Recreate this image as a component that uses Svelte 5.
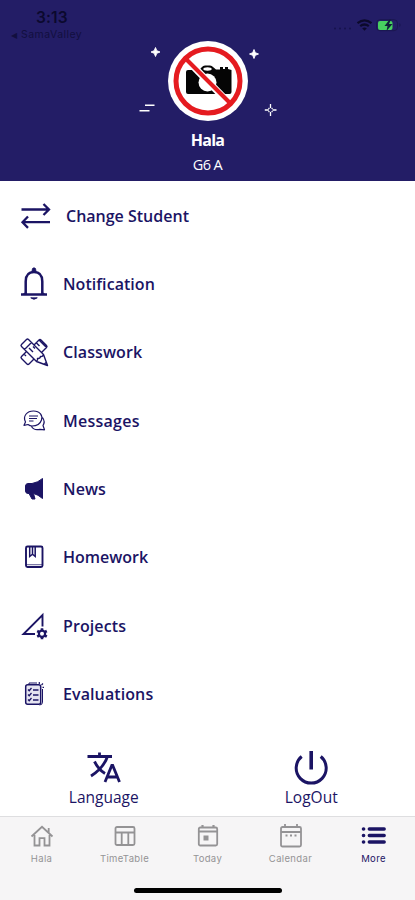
<script>
  const items = [
    { id: 'swap', label: 'Change Student', spacing: 0 },
    { id: 'bell', label: 'Notification', spacing: 0.05 },
    { id: 'classwork', label: 'Classwork', spacing: 0.1 },
    { id: 'messages', label: 'Messages', spacing: 0.25 },
    { id: 'news', label: 'News', spacing: 0.1 },
    { id: 'homework', label: 'Homework', spacing: 0 },
    { id: 'projects', label: 'Projects', spacing: 0.1 },
    { id: 'evaluations', label: 'Evaluations', spacing: 0.1 }
  ];
  const tabs = ['Hala', 'TimeTable', 'Today', 'Calendar', 'More'];
</script>

<main class="screen">
  <header>
    <div class="status">
      <div class="clock"><span class="time">3:13</span><span class="back"><i>◀</i> SamaValley</span></div>
      <svg class="signals" width="70" height="18" viewBox="0 0 70 18">
        <g fill="#17134c"><circle cx="3" cy="12.500" r="1"/><circle cx="8" cy="12.500" r="1"/><circle cx="13" cy="12.500" r="1"/><circle cx="18" cy="12.500" r="1"/></g>
        <g fill="none" stroke="#0c0a2b" stroke-width="2.200"><path d="M25.500 7.200q7-5.600 14 0M28.200 10.200q4.300-3.400 8.600 0"/></g>
        <path d="M30.200 12.300q2.300-1.700 4.600 0l-2.300 2.500z" fill="#0c0a2b"/>
        <rect x="44.500" y="3.700" width="21" height="11" rx="3.500" fill="none" stroke="#1b1750"/>
        <rect x="46" y="5" width="14.500" height="9" rx="2" fill="#48cf60"/>
        <path d="M57.500 3.500l-5 6.500h3l-1 5 6-7h-3.500l2-4.500z" fill="#10203b"/>
        <path d="M67.500 7v4q2-2 0-4" fill="#17134c"/>
      </svg>
    </div>
    <div class="profile">
      <svg width="140" height="84" viewBox="0 0 140 84">
        <circle cx="70" cy="42" r="40" fill="#fff"/>
        <path d="M48 33q0-2 2-2h11l3-3q1-1.500 3-1.500h5q2 0 3 1.500l3 2.500h4v-2.500h3V30h2v-2h3v2l3.500 1v22q0 2-2 2H50q-2 0-2-2z" fill="#050505"/>
        <circle cx="69.500" cy="43.500" r="9" fill="#fff"/>
        <ellipse cx="69.500" cy="30" rx="4.200" ry="1.700" fill="#fff"/>
        <path d="M48 20l44 45" stroke="#fff" stroke-width="7"/>
        <path d="M47.500 19.500l45 45" stroke="#e51b20" stroke-width="4"/>
        <circle cx="70" cy="42" r="32" fill="none" stroke="#e51b20" stroke-width="5"/>
        <path d="M17.500 8.500l1.300 3.200 3.200 1.300-3.200 1.300-1.300 3.200-1.300-3.200L13 13l3.200-1.300zM116 10.500l1.300 3.200 3.200 1.300-3.200 1.300-1.300 3.200-1.300-3.200-3.200-1.300 3.200-1.300z" fill="#fff" stroke="#fff" stroke-width=".9"/>
        <path d="M7 66.200h9.500M1.500 71.700h10" stroke="#fff" stroke-width="1.600"/>
        <path d="M132.500 65v4M132.500 73v4M126.800 71h4M134.500 71h4M130.500 69l4 4M134.500 69l-4 4" fill="none" stroke="#fff" stroke-width="1.300"/>
        <circle cx="132.500" cy="71" r="1.700" fill="#231d66"/>
      </svg>
      <strong>Hala</strong>
      <span>G6 A</span>
    </div>
  </header>

  <nav class="menu">
    {#each items as item}
      <a class="row" class:wide={item.id === 'swap'} href="#{item.id}">
        <svg width="34" height="34" viewBox="0 0 34 34" fill="none" stroke="currentColor" stroke-width="2">
          {#if item.id === 'swap'}
            <path d="M4.500 10.500h27M26.500 5l5.500 5.500-5.500 5.500M33 23.200H6M11 17.500l-5.500 5.700 5.500 5.700" stroke-width="2.300"/>
          {:else if item.id === 'bell'}
            <path d="M8.700 27V14.500Q8.700 5 17 5t8.300 9.500V27" stroke-width="2.500"/>
            <path d="M4 27.500h26" stroke-width="2.500"/>
            <path d="M8 22v3.500l-3 2h5zM26 22v3.500l3 2h-5z" fill="currentColor" stroke="none"/>
            <path d="M14.800 5l.7-3.500q1.500-1.500 3 0l.7 3.500zM13.700 30.800h6.600q-3.300 3-6.600 0z" fill="currentColor" stroke-width=".8"/>
          {:else if item.id === 'classwork'}
            <g stroke-width="1.400" stroke-linejoin="round">
              <path d="M4.500 9.500l5-5q1-1 2 0L26.500 19.500l4 11-11-4L4.500 11.500q-1-1 0-2zM7.500 14.500l7-7M19.500 26.500q1.500-1 1-3 2.500.5 3-2 2 .5 3-2M27 29.500l2-2"/>
              <path d="M17 10l5-5q1-1 2 0l5.500 5.500q1 1 0 2l-5 5M9.500 16.500l-5 5q-1 1 0 2L10 29q1 1 2 0l5-5M19.500 8l3 3M22 5l7.500 7.500M7 19l2 2M12 13l4 4M16 11.500l2 2"/>
            </g>
          {:else if item.id === 'messages'}
            <g stroke-width="1.200" stroke-linejoin="round">
              <path d="M8.500 18C5.500 12 10 7 16.500 7s9.500 4.500 8 9-5 6-9.500 6q-2 0-4-1.500L7 21.300zM25.500 13.500q3 4 .5 8l1.500 4.300-4.500-.5q-6 1.500-8.500-2.800"/>
              <path d="M12 12h9M12 14.500h8M12 17h4.500"/>
            </g>
          {:else if item.id === 'news'}
            <path d="M10.500 11.500h4.500q6-1 10.500-5v20q-4.500-4-9-5l1.500 5.500h-3l-3-5.500h-1.500q-2-.5-2-2.500v-5q0-2 2-2.500z" fill="currentColor" stroke-width="1"/>
          {:else if item.id === 'homework'}
            <rect x="9" y="6.500" width="16.500" height="20.500" rx="1.500" stroke-width="1.900"/>
            <path d="M12.700 7v9.500l2.800-2.300 2.700 2.300V7M15.500 7v7" stroke-width="1.500"/>
            <path d="M9 24.700h16" stroke-width=".7"/>
          {:else if item.id === 'projects'}
            <path d="M18 25H6.500L25.500 6v11.500" stroke-width="1.900"/>
            <circle cx="25" cy="24.800" r="3.100" stroke-width="2.200"/>
            <path d="M25 19.200v2.300M25 28v2.300M20.200 22l2 1.100M27.800 26.500l2 1.100M29.800 22l-2 1.100M22.200 26.500l-2 1.100" stroke-width="2.600"/>
          {:else}
            <rect x="8.700" y="7.800" width="15" height="19.500" rx="2" stroke-width="1.500" fill="#e5e4f0"/>
            <path d="M12 7V6h8M25.500 12v13q0 3-3 3" stroke-width="1"/>
            <path d="M11 12.500l1.200 1.200 2.300-2.700M11 17.500l1.200 1.200 2.300-2.700M11 22.500l1.200 1.200 2.300-2.700M16 13h5.500M16 18h5.500M16 23h5.500" stroke-width="1.300"/>
            <path d="M22.300 7V5M24.500 8l1.500-1.500M25.500 10.300h1.500" stroke-width="1.200"/>
          {/if}
        </svg>
        <span style="letter-spacing:{item.spacing}px">{item.label}</span>
      </a>
    {/each}
  </nav>

  <section class="actions">
    <button>
      <svg width="38" height="38" viewBox="0 0 38 38" fill="none" stroke="currentColor" stroke-width="2.800">
        <path d="M2.500 8.500h24.500M14.500 4.500v4M22.500 8.500Q18.500 20 6 28M9.500 13.500q4 8 10.500 12"/>
        <path d="M20 34l6.800-16.500h.9L34.500 34M22.300 29h10"/>
      </svg>
      <span>Language</span>
    </button>
    <button>
      <svg width="38" height="38" viewBox="0 0 38 38" fill="none" stroke="currentColor" stroke-width="3">
        <path d="M19.200 3v18.500" stroke-width="3.600"/><path d="M9.700 8.500A15 15 0 1 0 28.700 8.500"/>
      </svg>
      <span>LogOut</span>
    </button>
  </section>

  <footer>
    <div class="tabs">
      {#each tabs as tab}
        <a class="tab" class:active={tab === 'More'} href="#{tab}">
          <svg width="28" height="26" viewBox="0 0 28 26" fill="none" stroke="currentColor" stroke-width="1.800">
            {#if tab === 'Hala'}
              <path d="M3.500 13.500L14 3.800l10.500 9.700M6.500 12v10.500h5v-7.300h5v7.300h5V12M20.700 9.500V5"/>
            {:else if tab === 'TimeTable'}
              <rect x="4.500" y="4" width="19" height="18" rx="1.500"/><path d="M4.500 9.500h19M10.700 9.500v13M17.300 9.500v13"/>
            {:else if tab === 'Today'}
              <rect x="4.800" y="4.500" width="18.400" height="18" rx="1.500"/><path d="M5 8.500h18M8.500 2v3M19.500 2v3" stroke-width="2.200"/><path d="M9.500 12.500h5v5h-5z" fill="currentColor" stroke="none"/>
            {:else if tab === 'Calendar'}
              <rect x="4" y="4" width="20" height="19.500" rx="1.500"/><path d="M4 9h20M8 1v4M20 1v4"/><path d="M8.500 12.500h2M13 12.500h2M17.500 12.500h2"/>
            {:else}
              <path d="M9.300 6h14.900M9.300 12.500h14.900M9.300 19h14.900" stroke-width="3.400" stroke-linecap="round"/>
              <path d="M3.500 6h.1M3.500 12.500h.1M3.500 19h.1" stroke-width="3.600" stroke-linecap="round"/>
            {/if}
          </svg>
          <span>{tab}</span>
        </a>
      {/each}
    </div>
    <div class="home"></div>
  </footer>
</main>

<style>
  :global(body) { margin: 0; background: #fff; }
  .screen { width: 415px; height: 900px; display: flex; flex-direction: column; overflow: hidden; background: #fff; color: #1b1464; font-family: "Open Sans", "Noto Sans", sans-serif; }
  a { color: inherit; text-decoration: none; }
  svg { display: block; flex: none; }
  header { height: 181px; flex: none; background: #231d66; color: #fff; box-sizing: border-box; }
  .status { height: 39px; display: flex; justify-content: space-between; padding: 0 13px 0 11px; color: #0b092e; }
  .clock { display: flex; flex-direction: column; padding-top: 9px; font-family: Inter, sans-serif; }
  .time { font-size: 15.500px; line-height: 18px; font-weight: 600; padding-left: 25px; letter-spacing: .1px; }
  .back { font-size: 10.500px; line-height: 15px; color: #120f3f; letter-spacing: .45px; }
  .back i { font: normal 8px "DejaVu Sans", sans-serif; }
  .signals { margin-top: 16px; }
  .profile { display: flex; flex-direction: column; align-items: center; }
  .profile strong { font-size: 16px; line-height: 22px; margin-top: 6px; letter-spacing: -.8px; }
  .profile span { font-size: 14.500px; line-height: 20px; margin-top: 4px; letter-spacing: -.6px; }
  .menu { height: 546.400px; flex: none; display: flex; flex-direction: column; padding-top: .7px; }
  .row { height: 68.300px; display: flex; align-items: center; gap: 12px; padding-left: 17px; font-size: 16px; font-weight: 600; }
  .row.wide { gap: 15px; }
  .actions { flex: 1; display: flex; padding-top: 20px; }
  button { width: 50%; border: 0; padding: 0; background: none; color: inherit; font: 400 15.500px/23px "Open Sans", sans-serif; display: flex; flex-direction: column; align-items: center; }
  footer { height: 84px; flex: none; box-sizing: border-box; border-top: 1px solid #dedee0; background: #f6f5f6; }
  .tabs { height: 71px; display: flex; }
  .tab { width: 20%; display: flex; flex-direction: column; align-items: center; padding-top: 6px; color: #949395; font: 400 9.500px/14px Inter, sans-serif; }
  .tab span { margin-top: 3px; letter-spacing: .35px; }
  .tab.active { color: #1b1464; }
  .home { width: 148px; height: 5px; border-radius: 3px; background: #000; margin: 0 auto; }
</style>
